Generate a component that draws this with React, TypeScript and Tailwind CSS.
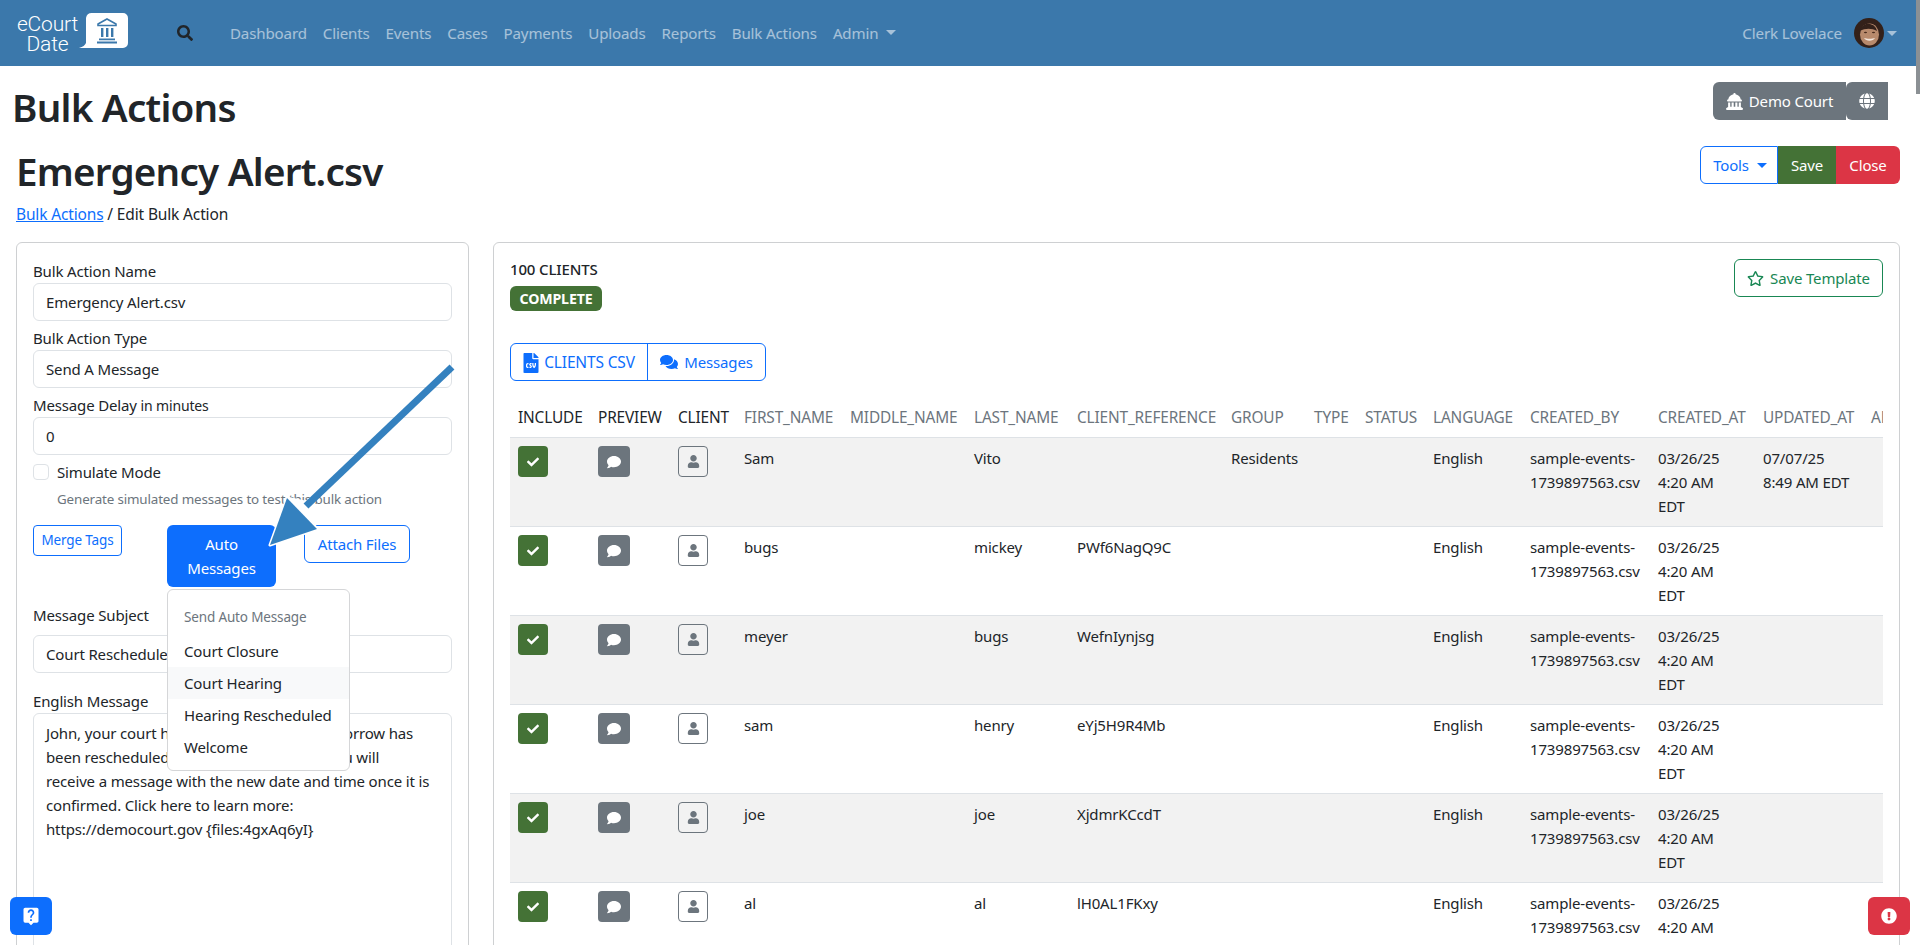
import { FaCheck, FaComment, FaComments, FaExclamationCircle, FaFileCsv, FaGlobe, FaRegStar, FaSearch, FaUser } from "react-icons/fa";
import { FaLandmarkDome } from "react-icons/fa6";
import { MdLiveHelp } from "react-icons/md";

const navLinks = ["Dashboard", "Clients", "Events", "Cases", "Payments", "Uploads", "Reports", "Bulk Actions"];

const columns = [
  { label: "INCLUDE", width: "w-[80px]", dark: true },
  { label: "PREVIEW", width: "w-[80px]", dark: true },
  { label: "CLIENT", width: "w-[66px]", dark: true },
  { label: "FIRST_NAME", width: "w-[106px]" },
  { label: "MIDDLE_NAME", width: "w-[124px]" },
  { label: "LAST_NAME", width: "w-[103px]" },
  { label: "CLIENT_REFERENCE", width: "w-[154px]" },
  { label: "GROUP", width: "w-[83px]" },
  { label: "TYPE", width: "w-[51px]" },
  { label: "STATUS", width: "w-[68px]" },
  { label: "LANGUAGE", width: "w-[97px]" },
  { label: "CREATED_BY", width: "w-[128px]" },
  { label: "CREATED_AT", width: "w-[105px]" },
  { label: "UPDATED_AT", width: "w-[108px]" },
  { label: "ARCHIVED_AT", width: "w-[120px]" },
];

const rows = [
  { first: "Sam", last: "Vito", ref: "", group: "Residents", updated: true },
  { first: "bugs", last: "mickey", ref: "PWf6NagQ9C" },
  { first: "meyer", last: "bugs", ref: "WefnIynjsg" },
  { first: "sam", last: "henry", ref: "eYj5H9R4Mb" },
  { first: "joe", last: "joe", ref: "XjdmrKCcdT" },
  { first: "al", last: "al", ref: "lH0AL1FKxy" },
];

function Caret({ className }: { className: string }) {
  return <span className={`inline-block border-x-[5px] border-t-[5px] border-x-transparent ${className}`} />;
}

function Logo() {
  return (
    <div className="flex items-start text-white">
      <div className="w-[65px] pt-[1px] text-center font-['Roboto',sans-serif] text-[21px] font-light leading-[20px]">
        <div>eCourt</div>
        <div>Date</div>
      </div>
      <svg width="52" height="36" viewBox="0 0 52 36" className="-ml-[3px] shrink-0">
        <path d="M15 0h31a5 5 0 0 1 5 5v25a5 5 0 0 1-5 5H2c4-1 6-3 7-5V5a6 6 0 0 1 6-5z" fill="#fff" />
        <path d="M30 6l9 5v1.5H21V11z" fill="none" stroke="#3b78ab" strokeWidth="1.6" />
        <path d="M24 15h2.4v9H24zM29 15h2.4v9H29zM34 15h2.4v9H34zM22 25.500h16v1.800H22zM20 28.500h20v2H20z" fill="#3b78ab" />
      </svg>
    </div>
  );
}

function Avatar() {
  return (
    <svg width="30" height="30" viewBox="0 0 30 30">
      <defs>
        <clipPath id="face-clip">
          <circle cx="15" cy="15" r="15" />
        </clipPath>
      </defs>
      <g clipPath="url(#face-clip)">
        <rect width="30" height="30" fill="#33211a" />
        <ellipse cx="15.500" cy="16.500" rx="9.500" ry="11" fill="#b88a6c" />
        <path d="M6 13c2-6 6-8 10-7 4 1 6 3 7 7-5-3-12-3-17 0z" fill="#33211a" />
        <ellipse cx="11.500" cy="14.500" rx="1.600" ry="0.800" fill="#4a2c1e" />
        <ellipse cx="19.500" cy="14.500" rx="1.600" ry="0.800" fill="#4a2c1e" />
        <path d="M10 20c2 3.500 9 3.500 11 0-3 1-8 1-11 0z" fill="#f3e6dc" />
      </g>
    </svg>
  );
}

function Field({ label, value, small }: { label: string; value: string; small?: string }) {
  return (
    <div className="mb-[5px]">
      <label className="block h-6 leading-6">
        {label} {small && <span className="text-[14px]">{small}</span>}
      </label>
      <div className="flex h-[38px] items-center rounded-md border border-[#dee2e6] px-3 whitespace-nowrap">{value}</div>
    </div>
  );
}

function ClientRow({ row, index }: { row: (typeof rows)[number]; index: number }) {
  const cell = "p-2 align-top";
  return (
    <tr className={`border-b border-[#dee2e6] ${index % 2 === 0 ? "bg-[#f2f2f2]" : "bg-white"}`}>
      <td className={cell}>
        <span className="flex h-[31px] w-[30px] items-center justify-center rounded bg-[#447236] text-[12px] text-white">
          <FaCheck />
        </span>
      </td>
      <td className={cell}>
        <span className="flex h-[31px] w-[32px] items-center justify-center rounded bg-[#6c757d] text-[14px] text-white">
          <FaComment />
        </span>
      </td>
      <td className={cell}>
        <span className="flex h-[31px] w-[30px] items-center justify-center rounded border border-[#6c757d] text-[13px] text-[#6c757d]">
          <FaUser />
        </span>
      </td>
      <td className={cell}>{row.first}</td>
      <td className={cell}></td>
      <td className={cell}>{row.last}</td>
      <td className={cell}>{row.ref}</td>
      <td className={cell}>{row.group}</td>
      <td className={cell}></td>
      <td className={cell}></td>
      <td className={cell}>English</td>
      <td className={cell}>
        sample-events-
        <br />
        1739897563.csv
      </td>
      <td className={cell}>
        03/26/25
        <br />
        4:20 AM
        <br />
        EDT
      </td>
      <td className={cell}>
        {row.updated && (
          <>
            07/07/25
            <br />
            8:49 AM EDT
          </>
        )}
      </td>
      <td className={cell}></td>
    </tr>
  );
}

export default function App() {
  return (
    <div className="relative flex h-[945px] w-full overflow-hidden bg-white font-['Noto_Sans',sans-serif] text-[15px] tracking-[-0.01em] text-[#212529]">
      <div className="w-[1916px] shrink-0">
        <nav className="flex h-[66px] items-center bg-[#3b78ab] pl-[15px] pr-[19px]">
          <Logo />
          <FaSearch className="ml-[48px] text-[16px] text-[#212529]" />
          <div className="ml-[37px] flex items-center gap-4 text-[15.100px] text-white/55">
            {navLinks.map((link) => (
              <a key={link}>{link}</a>
            ))}
            <a className="flex items-center gap-2">
              Admin <Caret className="border-t-white/55" />
            </a>
          </div>
          <div className="ml-auto flex items-center text-[15.200px] text-white/55">
            <span className="mr-3">Clerk Lovelace</span>
            <Avatar />
            <Caret className="ml-[3px] border-t-white/55" />
          </div>
        </nav>

        <div className="flex h-[80px] items-start justify-between pl-3 pr-7 pt-4">
          <h1 className="mt-[1px] text-[38.600px] font-semibold leading-[48px] tracking-[-0.02em]">Bulk Actions</h1>
          <div className="flex text-white">
            <span className="flex h-[38px] w-[133px] items-center justify-center gap-[6px] rounded-l-md bg-[#6c757d]">
              <FaLandmarkDome className="text-[17px]" /> Demo Court
            </span>
            <span className="flex h-[38px] w-[42px] items-center justify-center rounded-l-md bg-[#6c757d] text-[16px]">
              <FaGlobe />
            </span>
          </div>
        </div>

        <div className="flex h-[96px] items-start justify-between pl-[16px] pr-4">
          <div>
            <h1 className="mt-[1px] text-[38.600px] font-semibold leading-[48px] tracking-[-0.02em]">Emergency Alert.csv</h1>
            <div className="mt-[7px] text-[15.500px] leading-6">
              <a className="text-[#0d6efd] underline">Bulk Actions</a> / Edit Bulk Action
            </div>
          </div>
          <div className="flex">
            <span className="flex h-[38px] w-[78px] items-center justify-center gap-2 rounded-l-md border border-[#0d6efd] pl-[2px] text-[#0d6efd]">
              Tools <Caret className="border-t-[#0d6efd]" />
            </span>
            <span className="flex h-[38px] w-[58px] items-center justify-center bg-[#447236] text-white">Save</span>
            <span className="flex h-[38px] w-[64px] items-center justify-center rounded-r-md bg-[#dc3545] text-white">Close</span>
          </div>
        </div>

        <div className="ml-4 flex gap-6">
          <section className="relative h-[800px] w-[453px] shrink-0 rounded-md border border-[#ced0d2] p-4">
            <Field label="Bulk Action Name" value="Emergency Alert.csv" />
            <Field label="Bulk Action Type" value="Send A Message" />
            <Field label="Message Delay" small="in minutes" value="0" />
            <div className="flex h-6 items-center gap-2">
              <span className="h-4 w-4 rounded border border-[#dee2e6]" />
              Simulate Mode
            </div>
            <p className="mt-[5px] pl-6 text-[13.400px] leading-[21px] text-[#6c757d]">Generate simulated messages to test this bulk action</p>

            <div className="relative mt-[15px] flex items-start">
              <button className="h-[31px] w-[89px] rounded border border-[#0d6efd] text-[13.500px] text-[#0d6efd]">Merge Tags</button>
              <button className="ml-[45px] h-[62px] w-[109px] rounded-md bg-[#0d6efd] leading-6 text-white">
                Auto
                <br />
                Messages
              </button>
              <button className="ml-[28px] h-[38px] w-[106px] rounded-md border border-[#0d6efd] text-[#0d6efd]">Attach Files</button>
              <div className="absolute left-[134px] top-[64px] z-10 h-[182px] w-[183px] rounded-md border border-[#d5d6d8] bg-white py-2">
                <div className="flex h-[37px] items-center px-4 pt-[2px] text-[13.500px] text-[#6c757d]">Send Auto Message</div>
                <div className="flex h-[32px] items-center px-4">Court Closure</div>
                <div className="flex h-[32px] items-center bg-[#f8f9fa] px-4">Court Hearing</div>
                <div className="flex h-[32px] items-center px-4">Hearing Rescheduled</div>
                <div className="flex h-[32px] items-center px-4">Welcome</div>
              </div>
            </div>

            <div className="mt-4 h-6 leading-6">Message Subject</div>
            <div className="mt-2 flex h-[38px] items-center rounded-md border border-[#dee2e6] px-3 whitespace-nowrap">Court Rescheduled</div>
            <div className="mt-4 h-6 leading-6">English Message</div>
            <div className="h-[300px] rounded-md border border-[#dee2e6] px-3 pt-[7px] leading-6">
              John, your court hearing scheduled for tomorrow has
              <br />
              been rescheduled due to an emergency. You will
              <br />
              receive a message with the new date and time once it is
              <br />
              confirmed. Click here to learn more:
              <br />
              https://democourt.gov {"{files:4gxAq6yI}"}
            </div>
          </section>

          <section className="h-[800px] w-[1407px] shrink-0 rounded-md border border-[#ced0d2] px-4 pt-[14px]">
            <div className="flex items-start justify-between">
              <div>
                <div className="text-[15px] font-medium leading-6">100 CLIENTS</div>
                <span className="mt-[5px] flex h-[25px] w-[92px] items-center justify-center rounded-md bg-[#447236] text-[14.200px] font-bold text-white">COMPLETE</span>
              </div>
              <button className="mt-[2px] flex h-[38px] w-[149px] items-center justify-center gap-[6px] rounded-md border border-[#198754] text-[#198754]">
                <FaRegStar className="text-[17px]" /> Save Template
              </button>
            </div>

            <div className="mt-[32px] flex h-[38px] w-[256px] rounded-md border border-[#0d6efd] text-[#0d6efd]">
              <span className="flex w-[137px] items-center justify-center gap-[3px] border-r border-[#0d6efd] pr-[2px] pt-[1px] text-[15.500px]">
                <FaFileCsv className="text-[20px]" /> CLIENTS CSV
              </span>
              <span className="flex flex-1 items-center justify-center gap-[6px]">
                <FaComments className="text-[18px]" /> Messages
              </span>
            </div>

            <div className="mt-[17px] w-[1373px] overflow-hidden">
              <table className="w-[1473px] table-fixed border-collapse text-left">
                <colgroup>
                  {columns.map((col) => (
                    <col key={col.label} className={col.width} />
                  ))}
                </colgroup>
                <thead>
                  <tr className="border-b border-[#dee2e6]">
                    {columns.map((col) => (
                      <th key={col.label} className={`whitespace-nowrap px-2 pb-[7px] pt-[8px] text-[15.400px] font-normal leading-6 ${col.dark ? "text-[#212529]" : "text-[#6c757d]"}`}>
                        {col.label}
                      </th>
                    ))}
                  </tr>
                </thead>
                <tbody className="leading-6">
                  {rows.map((row, i) => (
                    <ClientRow key={row.first + i} row={row} index={i} />
                  ))}
                </tbody>
              </table>
            </div>
          </section>
        </div>
      </div>

      <div className="w-1 shrink-0">
        <div className="h-[94px] bg-[#8b9094]" />
      </div>

      <svg width="200" height="200" viewBox="0 0 200 200" className="absolute left-[262px] top-[360px] z-20">
        <path d="M190 7L47 143 25 138 8 185 55 169 39 148z" fill="#fff" stroke="#fff" strokeWidth="3" strokeLinejoin="round" />
        <path d="M190 7L44 146" stroke="#3481bf" strokeWidth="7" fill="none" />
        <path d="M25 138L8 185 55 169z" fill="#3481bf" />
      </svg>

      <button className="absolute bottom-[10px] left-[10px] z-20 flex h-[38px] w-[42px] items-center justify-center rounded-md bg-[#0d6efd] text-[20px] text-white">
        <MdLiveHelp />
      </button>
      <button className="absolute bottom-[10px] left-[1868px] z-20 flex h-[38px] w-[42px] items-center justify-center rounded-md bg-[#dc3545] text-[16px] text-white">
        <FaExclamationCircle />
      </button>
    </div>
  );
}
